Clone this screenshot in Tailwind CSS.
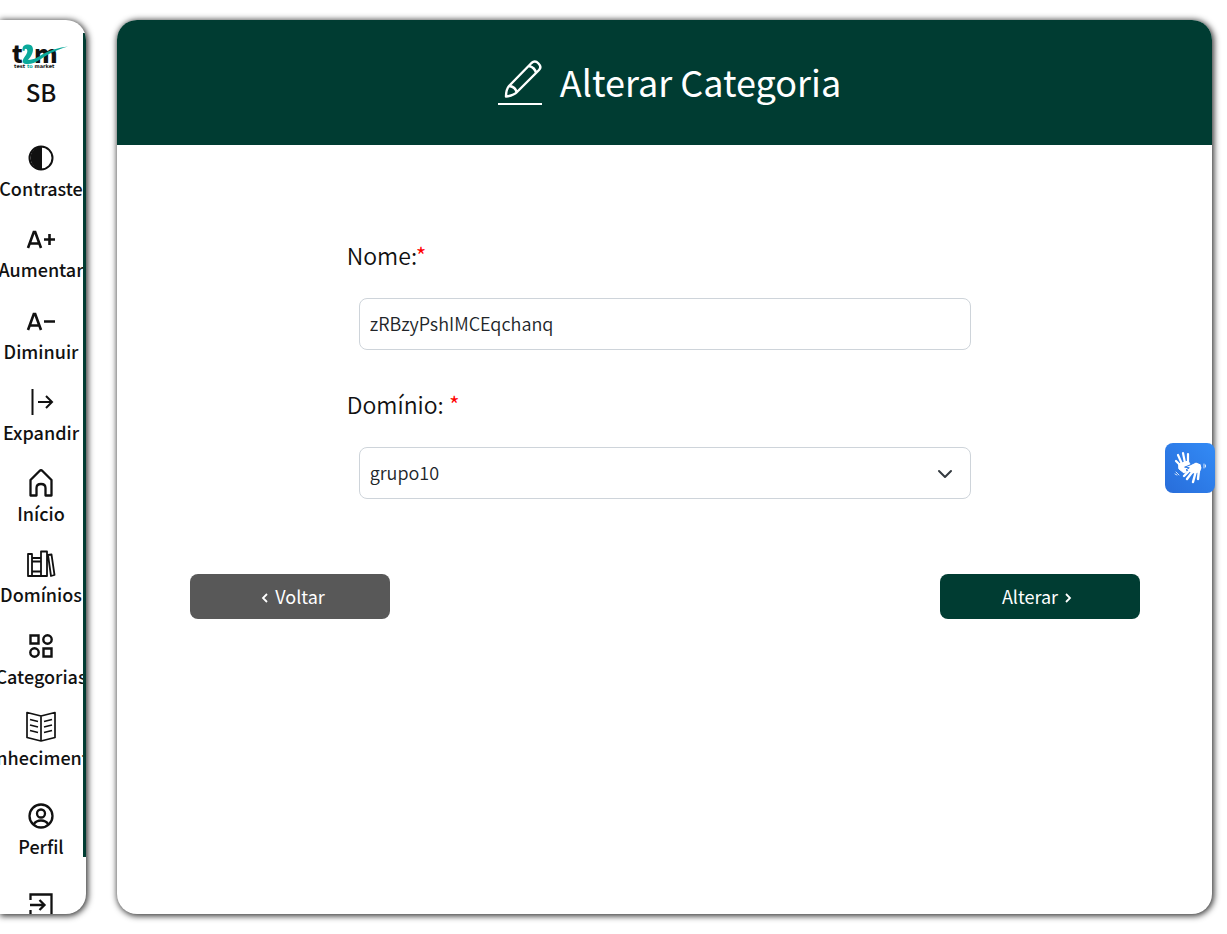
<!DOCTYPE html>
<html lang="pt-BR">
<head>
<meta charset="utf-8">
<meta name="viewport" content="width=device-width, initial-scale=1">
<title>Alterar Categoria</title>
<script src="https://cdn.jsdelivr.net/npm/@tailwindcss/browser@4"></script>
</head>
<body class="flex h-screen gap-[31px] overflow-hidden bg-white py-5 pr-[15px] font-['Noto_Sans_CJK_JP','Noto_Sans_CJK_SC',sans-serif] text-[#111]">

<aside class="relative w-[86px] shrink-0 overflow-hidden rounded-r-[20px] bg-white shadow-[1px_1px_6px_1px_#333]">
  <div class="flex w-[82px] flex-col items-center text-center text-lg font-medium leading-6 whitespace-nowrap">
    <svg class="mt-[22px] h-8 w-16" viewBox="0 0 64 32" role="img" aria-label="t2m test to market">
      <g fill="#111" font-weight="900">
        <text x="3" y="21" font-size="24" font-family="Noto Sans CJK JP, sans-serif">t</text>
        <text x="25" y="21" font-size="24" font-family="Noto Sans CJK JP, sans-serif">m</text>
        <text x="5" y="26" font-size="5" font-family="DejaVu Sans, sans-serif">test <tspan fill="#0ba99b">to</tspan> market</text>
      </g>
      <path d="M13.500 8.500C13 4 16 2.500 19 2.500c5 0 6.500 5 3.500 10.500-1.500 3-3 4-3.500 5C26 17.500 29 15 34 12 41 8 50 5.500 59 4.500 47 8 39 12 32 17c-5 3.500-10 5.500-15 5-4-.5-4-3.500-1.500-7C18 12 19 9 18 7.500c-1.200-1.500-2.500-.5-2.500 1.500Z" fill="#0ba99b"/>
    </svg>
    <p class="text-2xl leading-9">SB</p>
    <nav class="mt-6 grid h-[650px] w-full auto-rows-fr grid-cols-1" aria-label="Menu principal">
      <button type="button" class="flex flex-col items-center gap-0.5">
        <svg class="mt-2 h-8 w-8 shrink-0" viewBox="0 0 32 32" fill="none" stroke="currentColor" stroke-width="2"><circle cx="16" cy="16" r="11.5"/><path d="M17 4.500a11.500 11.500 0 0 0 0 23Z" fill="currentColor" stroke="none"/></svg>
        <span>Contraste</span>
      </button>
      <button type="button" class="flex flex-col items-center gap-0.5">
        <svg class="mt-2 h-8 w-8 shrink-0" viewBox="0 0 32 32" fill="none" stroke="currentColor" stroke-width="2.600"><path d="M3 25 8.800 9h1.400L16 25M5 20.500h9M19 16.500h11M24.500 11v11"/></svg>
        <span>Aumentar</span>
      </button>
      <button type="button" class="flex flex-col items-center gap-0.5">
        <svg class="mt-2 h-8 w-8 shrink-0" viewBox="0 0 32 32" fill="none" stroke="currentColor" stroke-width="2.600"><path d="M3 25 8.800 9h1.400L16 25M5 20.500h9M19 16.500h11"/></svg>
        <span>Diminuir</span>
      </button>
      <button type="button" class="flex flex-col items-center gap-0.5">
        <svg class="mt-2 h-8 w-8 shrink-0" viewBox="0 0 32 32" fill="none" stroke="currentColor" stroke-width="2"><path d="M7.500 3v26M13 16h14M21 10l6 6-6 6"/></svg>
        <span>Expandir</span>
      </button>
      <a href="#" class="flex flex-col items-center gap-0.5">
        <svg class="mt-2 h-8 w-8 shrink-0" viewBox="0 0 32 32" fill="none" stroke="currentColor" stroke-width="2.300" stroke-linejoin="round"><path d="M5.500 28.500V13L14.500 4Q16 2.500 17.500 4L26.500 13v15.500h-6V21q0-4-4.500-4t-4.500 4v7.500Z"/></svg>
        <span>Início</span>
      </a>
      <a href="#" class="flex flex-col items-center gap-0.5">
        <svg class="mt-2 h-8 w-8 shrink-0" viewBox="0 0 32 32" fill="none" stroke="currentColor" stroke-width="1.800" stroke-linejoin="round"><path d="M3 6h4v22H3zM7 10h9v18H7zM7 13.500h9M7 23.500h9M16 3.500h6V28h-6zM23 7l3.500-.5L29.500 27l-3.500 1Z"/></svg>
        <span>Domínios</span>
      </a>
      <a href="#" class="flex flex-col items-center gap-0.5">
        <svg class="mt-2 h-8 w-8 shrink-0" viewBox="0 0 32 32" fill="none" stroke="currentColor" stroke-width="2.400"><path d="M5.500 5.500h8v8h-8zM18.500 18.500h8v8h-8z"/><circle cx="22.500" cy="9.500" r="4.200"/><circle cx="9.500" cy="22.500" r="4.200"/></svg>
        <span>Categorias</span>
      </a>
      <a href="#" class="flex flex-col items-center gap-0.5">
        <svg class="mt-2 h-8 w-8 shrink-0" viewBox="0 0 32 32" fill="none" stroke="currentColor" stroke-width="1.700" stroke-linejoin="round"><path d="M16 5v25M16 5 2 1.500v25L16 30l14-3.500v-25ZM5 8.500l8 2M5 14l8 2M5 19.500l8 2M27 8.500l-8 2M27 14l-8 2M27 19.500l-8 2"/></svg>
        <span>Conhecimentos</span>
      </a>
    </nav>
    <a href="#" class="mt-2 flex flex-col items-center gap-0.5">
      <svg class="mt-2 h-8 w-8 shrink-0" viewBox="0 0 32 32" fill="none" stroke="currentColor" stroke-width="2.300"><circle cx="16" cy="16" r="11.500"/><circle cx="16" cy="13.500" r="4"/><path d="M8.500 24.500q2.500-4 7.500-4t7.500 4"/></svg>
      <span>Perfil</span>
    </a>
    <a href="#" class="mt-[23px] flex flex-col items-center gap-0.5">
      <svg class="mt-2 h-8 w-8 shrink-0" viewBox="0 0 32 32" fill="none" stroke="currentColor" stroke-width="2.300"><path d="M5.500 11V5.500h21v21h-21V21M5 16h14M14.500 11l5 5-5 5"/></svg>
      <span>Sair</span>
    </a>
  </div>
  <div class="absolute top-[13px] right-0 h-[824px] w-[3px] bg-[#003c32]"></div>
</aside>

<main class="min-w-0 flex-1 overflow-hidden rounded-[20px] bg-white shadow-[1px_1px_6px_1px_#333]">
  <header class="flex h-[125px] items-center justify-center gap-[17px] bg-[#003c32] pl-[7px] text-white">
    <svg class="h-12 w-12" viewBox="0 0 48 48" fill="none" stroke="currentColor" stroke-width="2.400" stroke-linejoin="round" aria-hidden="true"><path d="M11 37.500q0-7 3-10.500L36.500 4Q40 1 43.500 4.500T44 11L22 33q-3 3.500-11 4.500ZM14.500 27q6 1 7 6M34 7q6 1.500 7 7"/><path d="M3 45h44" stroke-width="2.200"/></svg>
    <h1 class="pb-1 text-4xl leading-[56px] font-normal">Alterar Categoria</h1>
  </header>

  <form class="pt-[90px] pr-[72px] pl-[73px]" onsubmit="return false">
    <div class="mx-auto w-[67%] text-[23px] font-[350]">
      <label for="nome" class="block leading-10">Nome:<span class="text-[#ff0000]">*</span></label>
      <div class="px-3 pt-[23px]">
        <input id="nome" type="text" value="zRBzyPshIMCEqchanq" required class="block h-[52px] w-full rounded-lg border border-[#ced4da] px-[10px] pb-0.5 text-lg text-[#212529]">
      </div>
      <label for="dominio" class="mt-[34px] block leading-10">Domínio: <span class="text-[#ff0000]">*</span></label>
      <div class="relative px-3 pt-[23px]">
        <select id="dominio" class="block h-[52px] w-full appearance-none rounded-lg border border-[#ced4da] bg-white px-[10px] pb-0.5 text-lg text-[#212529]">
          <option>grupo10</option>
        </select>
        <svg class="pointer-events-none absolute right-[30px] bottom-[17px] h-4 w-4" viewBox="0 0 16 16" fill="none" stroke="#343a40" stroke-width="2" stroke-linecap="round" stroke-linejoin="round" aria-hidden="true"><path d="m2 5 6 6 6-6"/></svg>
      </div>
    </div>
    <div class="mt-[75px] flex justify-between text-lg text-white">
      <button type="button" class="flex h-[45px] w-[200px] items-center justify-center gap-1 rounded-lg bg-[#585858] pb-px">
        <svg class="mt-1 h-4 w-4" viewBox="0 0 16 16" fill="none" stroke="currentColor" stroke-width="1.800" aria-hidden="true"><path d="M12 4 8 8l4 4"/></svg>
        <span>Voltar</span>
      </button>
      <button type="submit" class="flex h-[45px] w-[200px] items-center justify-center gap-1 rounded-lg bg-[#003c32] pb-px">
        <span>Alterar</span>
        <svg class="mt-1 h-4 w-4" viewBox="0 0 16 16" fill="none" stroke="currentColor" stroke-width="1.800" aria-hidden="true"><path d="m4 4 4 4-4 4"/></svg>
      </button>
    </div>
  </form>
</main>

<button type="button" aria-label="Acessível em Libras" class="fixed top-[443px] right-3 flex h-[50px] w-[50px] items-center justify-center rounded-lg bg-linear-to-bl from-[#338bf6] to-[#286dda] text-white">
  <svg class="h-9 w-9" viewBox="0 0 36 36" fill="none" stroke="currentColor" stroke-linecap="round" stroke-linejoin="round" aria-hidden="true">
    <path d="m9 16-5-5M10 14 6 5M13 13l-2-10M16 13V4" stroke-width="2.200"/>
    <path d="m7 14 9-3 2 3-4 8-2 1-5-4Z" fill="currentColor" stroke-width="1"/>
    <path d="m13 17 5-2 6-3 5 2 1 4-2 5-8 1-3-3-3-1 3-2Z" fill="#fff" stroke="#2d7ae7" stroke-width="1"/>
    <path d="m18 20-6 6M21 21l-6 8M24 21l-3 11M27 20l-1 9" stroke-width="2.400"/>
    <path d="M32 14v4M33.500 15v2M4 22l3 3M3 24l2 1" stroke-width="0.800"/>
  </svg>
</button>
</body>
</html>
